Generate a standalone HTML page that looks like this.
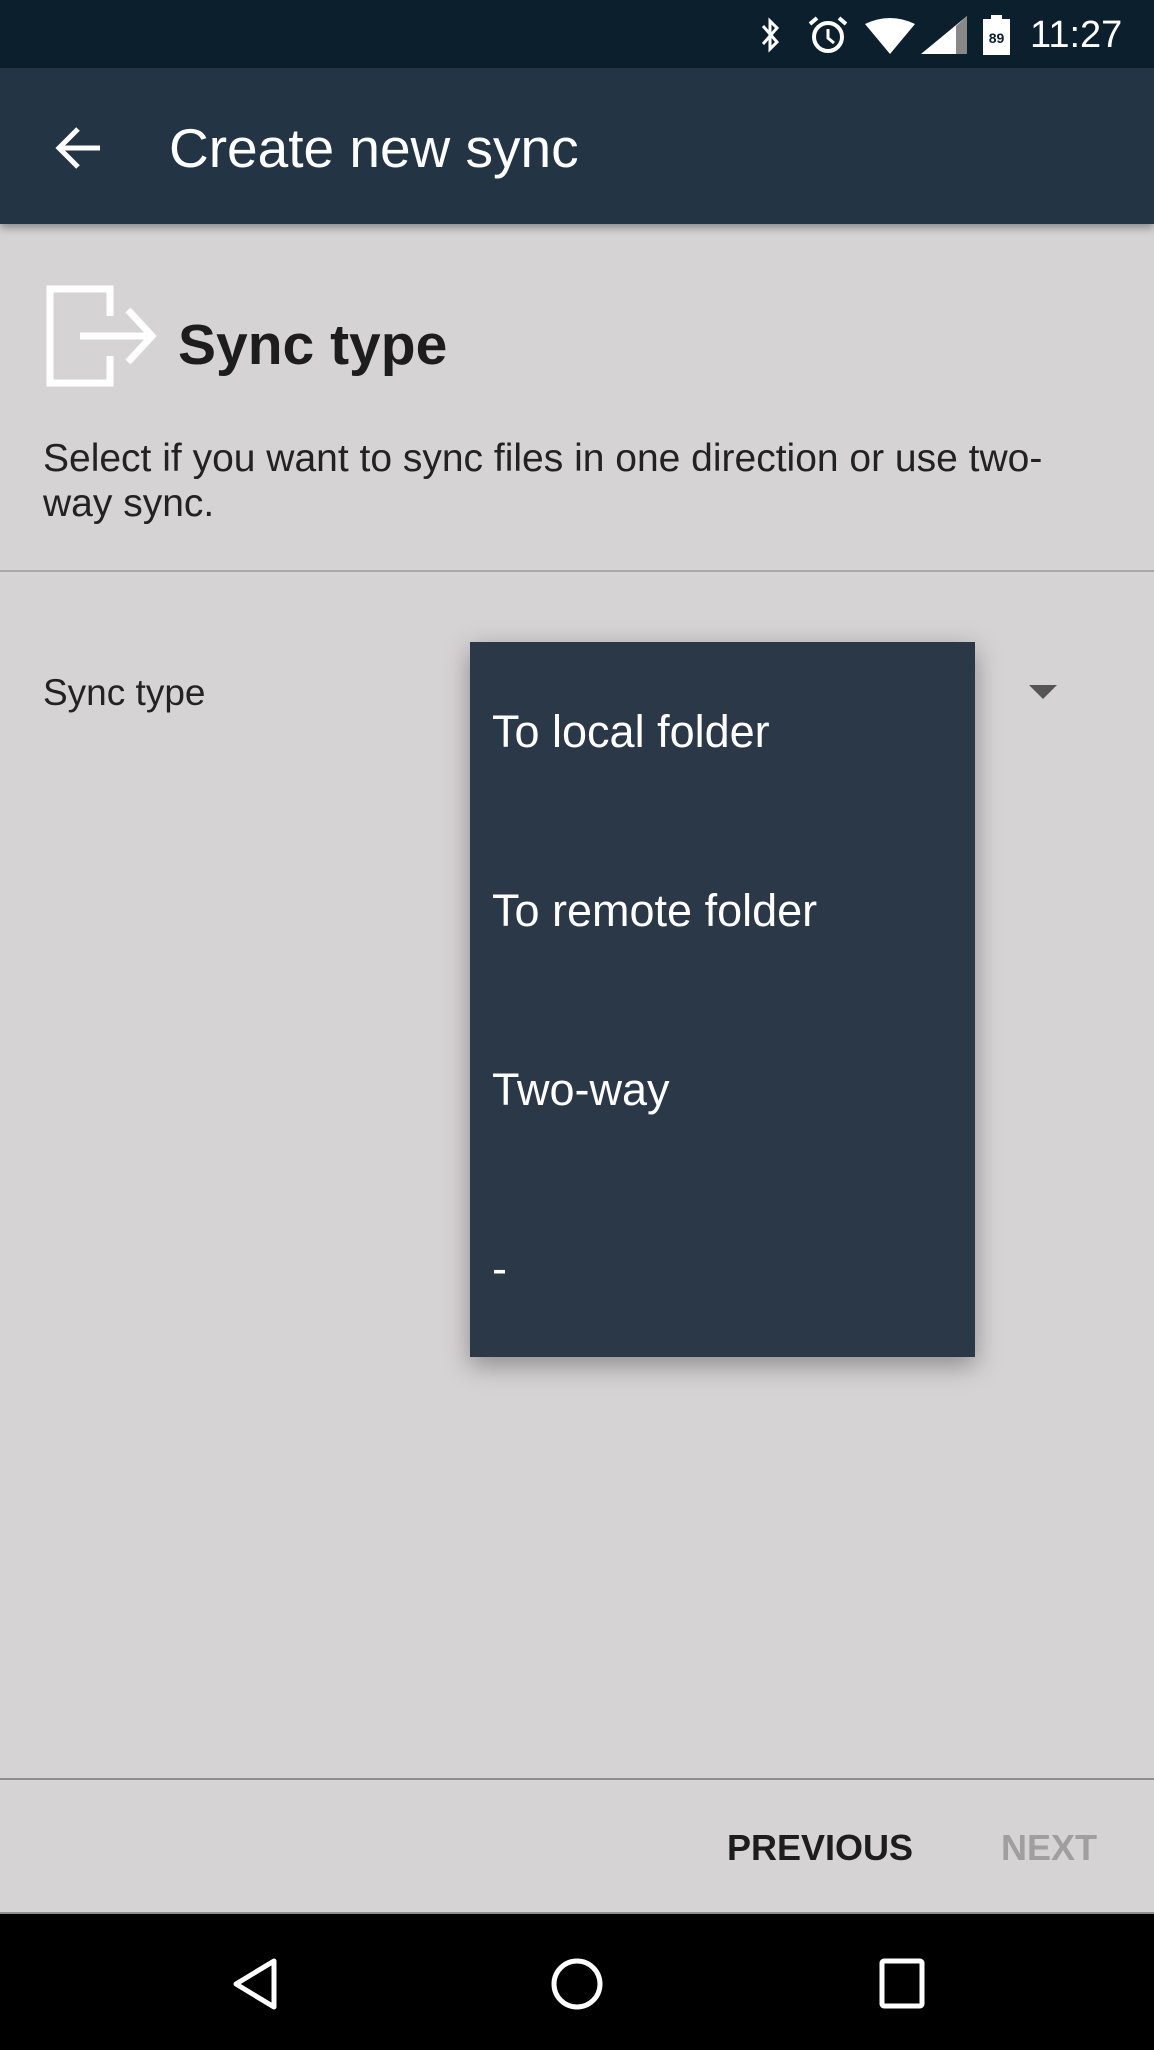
<!DOCTYPE html>
<html><head><meta charset="utf-8"><style>
*{margin:0;padding:0;box-sizing:border-box}
body{width:1154px;height:2050px;background:#d6d3d4;font-family:"Liberation Sans",sans-serif;position:relative;overflow:hidden}
.a{position:absolute}
</style></head><body>
<div class="a" style="left:0;top:0;width:1154px;height:68px;background:#0c1f2c"></div>
<div class="a" style="left:0;top:68px;width:1154px;height:156px;background:#233544;box-shadow:0 4px 8px rgba(0,0,0,.35)"></div>
<svg class="a" style="left:755px;top:12px" width="300" height="46" viewBox="0 0 300 46">
<path d="M8 14 L22 30 L15 37 V9 L22 16 L8 32" fill="none" stroke="#fff" stroke-width="3"/>
<circle cx="73" cy="25" r="14" fill="none" stroke="#fff" stroke-width="4"/>
<path d="M73 17 V26 L79 31" fill="none" stroke="#fff" stroke-width="3"/>
<path d="M55 12 L62 6 M91 12 L84 6" stroke="#fff" stroke-width="4"/>
<path d="M110 12 Q135 0 160 12 L135 42 Z" fill="#fff"/>
<path d="M166 42 L212 4 V42 Z" fill="#fff"/>
<path d="M201 14 L212 4 V42 H201 Z" fill="#888"/>
<rect x="228" y="7" width="27" height="36" fill="#fff"/><rect x="236" y="3" width="11" height="5" fill="#fff"/>
<text x="241.5" y="31" font-size="14" font-weight="bold" text-anchor="middle" fill="#0c1f2c" font-family="Liberation Sans">89</text>
</svg>
<div class="a" style="left:1030px;top:12px;color:#fff;font-size:38px;line-height:46px">11:27</div>
<svg class="a" style="left:54px;top:124px" width="50" height="48" viewBox="0 0 50 48"><path d="M46 24 H6 M24 5 L5 24 L24 43" fill="none" stroke="#fff" stroke-width="5"/></svg>
<div class="a" style="left:169px;top:116px;color:#fff;font-size:55px;line-height:64px">Create new sync</div>
<svg class="a" style="left:44px;top:283px" width="116" height="106" viewBox="0 0 116 106">
<path d="M66 33 V6 H6 V100 H66 V73" fill="none" stroke="#fff" stroke-width="7"/>
<path d="M36 53 H108 M84 27 L108 53 L84 79" fill="none" stroke="#fff" stroke-width="7"/>
</svg>
<div class="a" style="left:178px;top:311px;color:#1d1d1d;font-size:57px;font-weight:bold;line-height:68px">Sync type</div>
<div class="a" style="left:43px;top:436px;width:1100px;color:#222;font-size:39px;line-height:45px">Select if you want to sync files in one direction or use two-<br>way sync.</div>
<div class="a" style="left:0;top:570px;width:1154px;height:2px;background:#a9a7a8"></div>
<div class="a" style="left:43px;top:671px;color:#222;font-size:37px;line-height:44px">Sync type</div>
<svg class="a" style="left:1029px;top:685px" width="28" height="16"><path d="M0 0 H28 L14 14Z" fill="#555"/></svg>
<div class="a" style="left:470px;top:642px;width:505px;height:715px;background:#2b3847;box-shadow:0 8px 24px rgba(0,0,0,.35)"></div>
<div class="a" style="left:492px;top:705px;color:#fff;font-size:45px;line-height:54px">To local folder</div>
<div class="a" style="left:492px;top:884px;color:#fff;font-size:45px;line-height:54px">To remote folder</div>
<div class="a" style="left:492px;top:1063px;color:#fff;font-size:45px;line-height:54px">Two-way</div>
<div class="a" style="left:492px;top:1242px;color:#fff;font-size:45px;line-height:54px">-</div>
<div class="a" style="left:0;top:1778px;width:1154px;height:2px;background:#8f8d8e"></div>
<div class="a" style="left:727px;top:1828px;color:#1d1d1d;font-size:36px;font-weight:bold;line-height:40px">PREVIOUS</div>
<div class="a" style="left:1001px;top:1828px;color:#a09e9f;font-size:36px;font-weight:bold;line-height:40px">NEXT</div>
<div class="a" style="left:0;top:1912px;width:1154px;height:2px;background:#8f8d8e"></div>
<div class="a" style="left:0;top:1914px;width:1154px;height:136px;background:#000"></div>
<svg class="a" style="left:0;top:1914px" width="1154" height="136">
<path d="M274 47 L236 70 L274 93 Z" fill="none" stroke="#fff" stroke-width="5" stroke-linejoin="round"/>
<circle cx="577" cy="70" r="23" fill="none" stroke="#fff" stroke-width="5"/>
<rect x="882" y="47" width="40" height="45" rx="2" fill="none" stroke="#fff" stroke-width="5"/>
</svg>
</body></html>
